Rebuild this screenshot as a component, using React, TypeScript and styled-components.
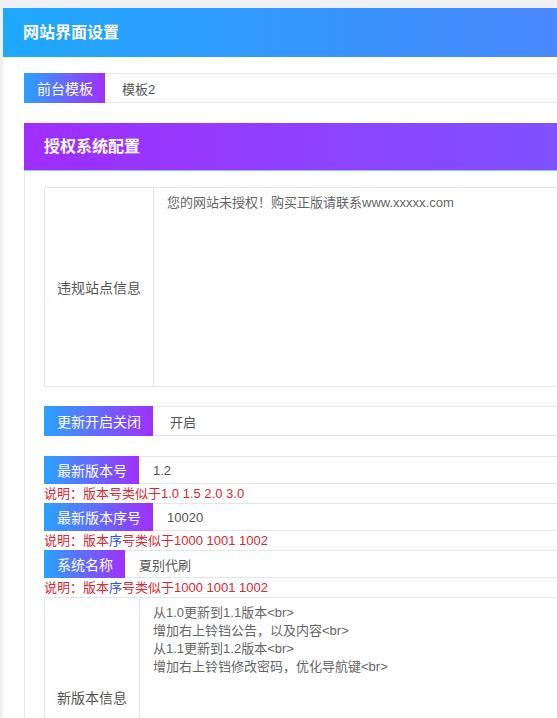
import styled, { createGlobalStyle } from 'styled-components'

const GlobalStyle = createGlobalStyle`
  html, body {
    margin: 0;
    padding: 0;
    background: #eef0f4;
    overflow: hidden;
    font-family: "Liberation Sans", "Noto Sans CJK SC", sans-serif;
  }
`

interface FieldProps {
  label: string
  value: string
  compact?: boolean
}

const Field = ({ label, value, compact }: FieldProps) => (
  <Row $compact={compact}>
    <Label>{label}</Label>
    <Value $compact={compact}>{value}</Value>
  </Row>
)

interface AreaProps {
  label: string
  lines: string[]
}

const AreaField = ({ label, lines }: AreaProps) => (
  <Area>
    <AreaLabel>{label}</AreaLabel>
    <AreaText>
      {lines.map((line, i) => (
        <div key={i}>{line}</div>
      ))}
    </AreaText>
  </Area>
)

export default function App() {
  return (
    <>
      <GlobalStyle />
      <Page>
        <Panel>
          <PanelHeader>网站界面设置</PanelHeader>
          <PanelBody>
            <Field label="前台模板" value="模板2" />
            <Card>
              <CardHeader>授权系统配置</CardHeader>
              <CardBody>
                <AreaField label="违规站点信息" lines={['您的网站未授权！购买正版请联系www.xxxxx.com']} />
                <Spaced $top={19}>
                  <Field label="更新开启关闭" value="开启" />
                </Spaced>
                <Spaced $top={20}>
                  <Field compact label="最新版本号" value="1.2" />
                  <Note>说明：版本号类似于1.0 1.5 2.0 3.0</Note>
                  <Field compact label="最新版本序号" value="10020" />
                  <Note>
                    说明：版本<Blue>序</Blue>号类似于1000 1001 1002
                  </Note>
                  <Field compact label="系统名称" value="夏别代刷" />
                  <Note>
                    说明：版本<Blue>序</Blue>号类似于1000 1001 1002
                  </Note>
                  <AreaField
                    label="新版本信息"
                    lines={[
                      '从1.0更新到1.1版本<br>',
                      '增加右上铃铛公告，以及内容<br>',
                      '从1.1更新到1.2版本<br>',
                      '增加右上铃铛修改密码，优化导航键<br>'
                    ]}
                  />
                </Spaced>
              </CardBody>
            </Card>
          </PanelBody>
        </Panel>
      </Page>
    </>
  )
}

const Page = styled.div`
  padding: 8px 0 0 3px;
`

const Panel = styled.div`
  width: 620px;
  min-height: 720px;
  background: #fff;
`

const PanelHeader = styled.div`
  height: 49px;
  box-sizing: border-box;
  display: flex;
  align-items: center;
  padding: 0 0 3px 20px;
  background: linear-gradient(90deg, #1ea8ff 0%, #4987ff 90%, #4c84ff 100%);
  color: #fff;
  font-size: 16px;
  font-weight: bold;
`

const PanelBody = styled.div`
  padding: 16px 0 0 21px;
`

const Row = styled.div<{ $compact?: boolean }>`
  display: flex;
  height: ${(p) => (p.$compact ? 28 : 30)}px;
`

const Label = styled.div`
  display: flex;
  align-items: center;
  padding: 0 12px 0 13px;
  background: linear-gradient(90deg, #2aa2fe 0%, #a030fe 100%);
  color: #fff;
  font-size: 14px;
  white-space: nowrap;
`

const Value = styled.div<{ $compact?: boolean }>`
  flex: 1;
  display: flex;
  align-items: center;
  padding-left: ${(p) => (p.$compact ? 14 : 17)}px;
  border: 1px solid #e6e6e6;
  border-left: none;
  color: #555;
  font-size: 13px;
`

const Card = styled.div`
  margin-top: 20px;
`

const CardHeader = styled.div`
  height: 48px;
  box-sizing: border-box;
  display: flex;
  align-items: center;
  padding: 0 0 3px 20px;
  background: linear-gradient(90deg, #a02dff 0%, #7e52ff 90%, #7a56ff 100%);
  border-bottom: 1px solid #8cc4ff;
  color: #fff;
  font-size: 16px;
  font-weight: bold;
`

const CardBody = styled.div`
  padding: 16px 0 0 19px;
  border-left: 1px solid #e8e8e8;
`

const Spaced = styled.div<{ $top: number }>`
  margin-top: ${(p) => p.$top}px;
`

const Area = styled.div`
  display: flex;
  height: 200px;
  box-sizing: border-box;
  border: 1px solid #e6e6e6;
`

const AreaLabel = styled.div`
  display: flex;
  align-items: center;
  padding: 0 12px;
  border-right: 1px solid #e6e6e6;
  color: #555;
  font-size: 14px;
  white-space: nowrap;
`

const AreaText = styled.div`
  flex: 1;
  padding: 6px 13px;
  color: #666;
  font-size: 13px;
  line-height: 18px;
`

const Note = styled.div`
  height: 19px;
  line-height: 19px;
  color: #e0262f;
  font-size: 13px;
`

const Blue = styled.span`
  color: #2b4cff;
`
